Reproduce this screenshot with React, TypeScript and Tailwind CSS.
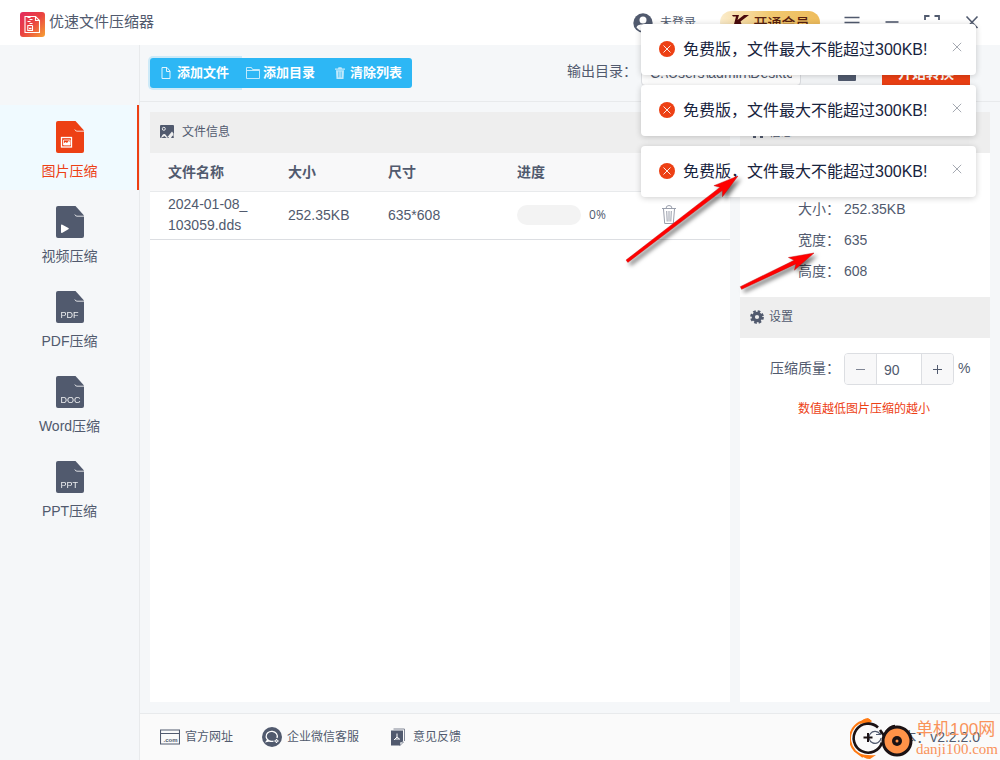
import { useState } from 'react';
import type { ReactNode } from 'react';

interface NavItem {
    label: string;
    badge: ReactNode;
}

interface FileItem {
    name: string;
    size: string;
    width: number;
    height: number;
    progress: number;
}

const BadgeText = ({ text }: { text: string }) => (
    <text x="4.5" y="27" fontSize="9" fill="#fff" opacity="0.9" fontFamily="Liberation Sans, Arial, sans-serif">{text}</text>
);

const navItems: NavItem[] = [
    {
        label: '图片压缩',
        badge: (
            <g>
                <rect x="5.5" y="16.5" width="10" height="9.5" fill="none" stroke="#fff" strokeWidth="1.3" />
                <path d="M7.500 19h6.500v5H7.500z" fill="none" stroke="#fff" strokeWidth=".8" />
                <path d="M7.500 24v-1.500l2-1.500 1.500 1 1.500-2 1.500 1v3z" fill="#fff" />
            </g>
        ),
    },
    { label: '视频压缩', badge: <path d="M5 19.500q0-1.500 1.400-.800l6 3.400q1 .600 0 1.200l-6 3.400q-1.400.700-1.400-.800z" fill="#fff" /> },
    { label: 'PDF压缩', badge: <BadgeText text="PDF" /> },
    { label: 'Word压缩', badge: <BadgeText text="DOC" /> },
    { label: 'PPT压缩', badge: <BadgeText text="PPT" /> },
];

const files: FileItem[] = [
    { name: '2024-01-08_103059.dds', size: '252.35KB', width: 635, height: 608, progress: 0 },
];

const FileIcon = ({ children }: { children: ReactNode }) => (
    <svg width="28" height="32" viewBox="0 0 28 32">
        <path d="M2 0h17.500l8.500 9.500V30a2 2 0 0 1-2 2H2a2 2 0 0 1-2-2V2a2 2 0 0 1 2-2z" fill="currentColor" />
        <path d="M18.800 8.500q.700 1.700 2.200 1.700h7" fill="none" stroke="#fff" strokeWidth="1" opacity="0.8" />
        {children}
    </svg>
);

const Logo = () => (
    <svg width="25" height="25" viewBox="0 0 25 25">
        <defs>
            <linearGradient id="logo" x1="0" y1="0" x2="1" y2="1">
                <stop offset="0" stopColor="#e3295f" />
                <stop offset="0.5" stopColor="#ea4440" />
                <stop offset="1" stopColor="#f7a234" />
            </linearGradient>
        </defs>
        <rect width="25" height="25" rx="3" fill="url(#logo)" />
        <path d="M5 4.500h10.500l4 4v12H5z M15.500 4.500v4h4" fill="none" stroke="#fff" strokeWidth="1.100" />
        <path d="M7.500 5.500h3M9.500 7.500h3M7.500 9.500h3M9.500 11.500h3M7.500 13.500h5" stroke="#fff" strokeWidth="1.100" />
        <path d="M7.800 13.500v5h4.700v-5" fill="none" stroke="#fff" strokeWidth="1.100" />
        <path d="M9 16.500h2.500" stroke="#fff" strokeWidth="1.400" />
    </svg>
);

const Header = () => (
    <header className="flex h-[45px] items-center justify-between bg-white px-5">
        <div className="flex items-center gap-1 pt-1">
            <Logo />
            <h1 className="-mt-1 text-[15px]">优速文件压缩器</h1>
        </div>
        <div className="flex items-center">
            <button className="flex items-center gap-[7px] text-xs">
                <svg width="20" height="20" viewBox="0 0 20 20">
                    <circle cx="10" cy="10" r="9.700" fill="currentColor" />
                    <circle cx="10" cy="7" r="3.500" fill="#fff" />
                    <path d="M3.500 14.500c1-3 3.500-3 6.500-3s5.500 0 6.500 3c-2 2.500-4 3.500-6.500 3.500s-4.500-1-6.500-3.500z" fill="#fff" />
                </svg>
                未登录
            </button>
            <button className="ml-6 flex h-[23px] w-[100px] items-center justify-center gap-1 rounded-full bg-gradient-to-r from-[#fbeccb] via-[#f1c86f] to-[#eebc5c] text-sm font-medium text-[#57200f]">
                <svg width="19" height="15" viewBox="0 0 19 15">
                    <path d="M1 0h7L6.500 5 13 0h5l-8.500 6.500L13 15H9L6.500 9 5 15H1.500L5 1.500H2z" fill="#4a0a0c" />
                </svg>
                开通会员
            </button>
            <button className="ml-6" aria-label="菜单">
                <svg width="16" height="16" viewBox="0 0 16 16" fill="none" stroke="currentColor" strokeWidth="1.600">
                    <path d="M.5 2.500h15M.5 7.500h15M.5 12.500h15" />
                </svg>
            </button>
            <button className="ml-6" aria-label="最小化">
                <svg width="16" height="16" viewBox="0 0 16 16" fill="none" stroke="currentColor" strokeWidth="1.600">
                    <path d="M1.500 7h13" />
                </svg>
            </button>
            <button className="ml-6" aria-label="最大化">
                <svg width="16" height="16" viewBox="0 0 16 16" fill="none" stroke="currentColor" strokeWidth="1.800">
                    <path d="M1 5V1h4.500M10.500 1H15v4M15 11v4h-4.500M5.500 15H1v-4" />
                </svg>
            </button>
            <button className="ml-6" aria-label="关闭">
                <svg width="16" height="16" viewBox="0 0 16 16" fill="none" stroke="currentColor" strokeWidth="1.600">
                    <path d="M2.500 1.500l11 11.500M13.500 1.500L2.500 13" />
                </svg>
            </button>
        </div>
    </header>
);

const Sidebar = ({ active, onSelect }: { active: number; onSelect: (i: number) => void }) => (
    <nav className="flex w-[140px] shrink-0 flex-col border-r border-[#e8eaec] pt-[60px]">
        {navItems.map((item, i) => (
            <button
                key={item.label}
                onClick={() => onSelect(i)}
                className={`flex h-[85px] flex-col items-center gap-2 pt-4 text-sm ${i === active ? 'bg-[#f0faff] text-[#ed4014] shadow-[inset_-2px_0_0_#ed4014]' : ''}`}
            >
                <FileIcon>{item.badge}</FileIcon>
                <span>{item.label}</span>
            </button>
        ))}
    </nav>
);

const Toolbar = () => (
    <div className="flex h-[57px] items-center justify-between border-b border-[#e8eaec] pl-[10px] pr-[30px]">
        <div className="flex h-[30px] rounded-[3px] bg-[#2db7f5] text-[13px] font-bold text-white">
            <button className="flex w-[90px] items-center gap-[6px] rounded-l-[3px] pl-[11px] shadow-[0_0_0_2px_rgba(45,183,245,0.2)]">
                <svg width="10" height="12" viewBox="0 0 10 12" fill="none" stroke="#fff" opacity="0.85">
                    <path d="M1 .5h5L9 4v7.500H1z M5.500.5v4H9" />
                </svg>
                添加文件
            </button>
            <button className="relative flex w-[86px] items-center gap-[3px] bg-[#2db7f5] pl-[6px]">
                <svg width="14" height="12" viewBox="0 0 14 12" fill="none" stroke="#fff" opacity="0.7">
                    <path d="M.5.5h5l1 2h7v9H.500z M.500 3.500h13" />
                </svg>
                添加目录
            </button>
            <button className="flex w-[86px] items-center gap-[5px] rounded-r-[3px] pl-[9px]">
                <svg width="10" height="12" viewBox="0 0 10 12" opacity="0.7">
                    <path d="M0 1.500h3L3.500.3h3l.5 1.200h3v1.200H0z" fill="#fff" />
                    <path d="M1 3.200h8L8.500 12h-7z" fill="#fff" />
                    <path d="M3.500 4.500v6M5 4.500v6M6.500 4.500v6" stroke="#2db7f5" strokeWidth=".5" />
                </svg>
                清除列表
            </button>
        </div>
        <div className="flex items-center">
            <label htmlFor="output" className="-mt-1 mr-1 text-sm">输出目录：</label>
            <input
                id="output"
                readOnly
                value="C:\Users\admin\Desktop"
                className="h-[26px] w-40 rounded border border-[#dcdee2] bg-white px-2 text-sm"
            />
            <button className="ml-[37px]" aria-label="打开目录">
                <svg width="18" height="18" viewBox="0 0 18 18" fill="currentColor">
                    <path d="M0 3a2 2 0 0 1 2-2h5l2 3h7a2 2 0 0 1 2 2v10a1 1 0 0 1-1 1H1a1 1 0 0 1-1-1z" />
                </svg>
            </button>
            <button className="ml-[26px] h-[30px] w-[88px] bg-[#ed4014] text-sm font-bold text-white">开始转换</button>
        </div>
    </div>
);

const PanelHeader = ({ icon, title }: { icon: ReactNode; title: string }) => (
    <h2 className="flex h-[41px] items-center bg-[#eee] px-[10px] pb-[2px] text-xs">
        {icon}
        {title}
    </h2>
);

const FilePanel = () => (
    <section className="flex-1 bg-white">
        <PanelHeader
            title="文件信息"
            icon={
                <svg className="mr-2" width="14" height="14" viewBox="0 0 14 14">
                    <rect width="14" height="13" rx="1" fill="currentColor" />
                    <circle cx="3.800" cy="3.800" r="1.500" fill="none" stroke="#eee" />
                    <path d="M1 13q1.500-4.500 3.500-4 1.500.5 2 2l1 1 2-2.500L12 6.500l1.500 2V12l-1-1.500-1.500 2.500H9l-.500-1-2 1-2-2z" fill="#eee" />
                </svg>
            }
        />
        <table className="w-full table-fixed text-left text-sm">
            <colgroup>
                <col className="w-[120px]" />
                <col className="w-[100px]" />
                <col />
                <col className="w-[151px]" />
                <col className="w-20" />
            </colgroup>
            <thead>
                <tr className="h-[38px] border-b border-[#e8eaec] bg-[#f8f8f9]">
                    <th className="px-[18px]">文件名称</th>
                    <th className="pl-[18px]">大小</th>
                    <th className="pl-[18px]">尺寸</th>
                    <th className="pl-[18px]">进度</th>
                    <th />
                </tr>
            </thead>
            <tbody>
                {files.map((file) => (
                    <tr key={file.name} className="h-12 border-b border-[#dcdee2]">
                        <td className="break-all pl-[18px] pr-4 leading-[21px]">{file.name}</td>
                        <td className="pl-[18px]">{file.size}</td>
                        <td className="pl-[18px]">{file.width}*{file.height}</td>
                        <td className="pl-[18px]">
                            <div className="flex items-center gap-2">
                                <div className="h-5 w-16 overflow-hidden rounded-full bg-[#f3f3f3]">
                                    <div className="h-full bg-[#2db7f5]" style={{ width: `${file.progress}%` }} />
                                </div>
                                <span className="font-['Open_Sans',sans-serif] text-xs">{file.progress}%</span>
                            </div>
                        </td>
                        <td className="pb-[2px] pl-3">
                            <button className="block" aria-label="删除">
                                <svg width="14" height="19" viewBox="0 0 14 19" fill="none" stroke="#9a9fac">
                                    <path d="M0 3.500h14M4 3.500q0-3 3-3t3 3M1.500 4l1.200 14.500h8.600L12.500 4M4.700 6l.500 10.500M7 6v10.500M9.300 6l-.500 10.500" />
                                </svg>
                            </button>
                        </td>
                    </tr>
                ))}
            </tbody>
        </table>
    </section>
);

const InfoPanel = ({ file }: { file: FileItem }) => {
    const [quality, setQuality] = useState(90);

    const rows = [
        ['名称', file.name],
        ['大小', file.size],
        ['宽度', file.width],
        ['高度', file.height],
    ];

    return (
        <section className="w-[250px] shrink-0 bg-white">
            <PanelHeader
                title="信息"
                icon={
                    <svg className="ml-[3px] mr-[6px]" width="10" height="14" viewBox="0 0 10 14" fill="currentColor">
                        <path d="M2 1h6v4h2v8H7V9H3v4H0V5h2z" />
                    </svg>
                }
            />
            <dl className="pb-[11px] pt-[9px] text-sm">
                {rows.map(([label, value]) => (
                    <div key={label} className="flex h-[31px] items-center pl-[58px]">
                        <dt className="w-[46px] shrink-0">{label}：</dt>
                        <dd className="max-w-[125px] truncate">{value}</dd>
                    </div>
                ))}
            </dl>
            <PanelHeader
                title="设置"
                icon={
                    <svg className="mr-[5px]" width="14" height="14" viewBox="0 0 14 14" fill="none" stroke="currentColor">
                        <circle cx="7" cy="7" r="3.700" strokeWidth="3.200" />
                        <circle cx="7" cy="7" r="5.700" strokeWidth="2.400" strokeDasharray="2.600 1.877" />
                    </svg>
                }
            />
            <div className="flex items-center pl-[30px] pt-[15px] text-sm">
                <label htmlFor="quality" className="w-[74px] pb-[2px]">压缩质量：</label>
                <div className="flex h-8 overflow-hidden rounded border border-[#dcdee2]">
                    <button className="w-8 border-r border-[#dcdee2] bg-[#f8f8f9]" aria-label="减少" onClick={() => setQuality(Math.max(1, quality - 1))}>
                        <svg className="mx-auto" width="9" height="9" viewBox="0 0 9 9" stroke="#808695"><path d="M0 4.500h9" /></svg>
                    </button>
                    <input
                        id="quality"
                        className="w-11 pl-[7px] pt-[2px]"
                        value={quality}
                        onChange={(e) => setQuality(Number(e.target.value) || 0)}
                    />
                    <button className="w-8 border-l border-[#dcdee2] bg-[#f8f8f9]" aria-label="增加" onClick={() => setQuality(Math.min(100, quality + 1))}>
                        <svg className="mx-auto" width="9" height="9" viewBox="0 0 9 9" stroke="#515a6e"><path d="M0 4.500h9M4.500 0v9" /></svg>
                    </button>
                </div>
                <span className="ml-1 pb-[2px]">%</span>
            </div>
            <p className="mt-4 pl-[58px] text-xs text-[#ed4014]">数值越低图片压缩的越小</p>
        </section>
    );
};

const Footer = () => (
    <footer className="flex h-[47px] items-center justify-between border-t border-[#e8eaec] bg-[#fafafa] px-5 text-xs">
        <div className="flex items-center">
            <a href="#site" className="flex items-center gap-[5px]">
                <svg width="20" height="16" viewBox="0 0 20 16">
                    <path d="M.5 1h19v14H.500zM.500 4.500h19" fill="none" stroke="currentColor" strokeWidth="1.100" />
                    <text x="3.500" y="12.500" fontSize="6" fontWeight="bold" fill="currentColor" fontFamily="Liberation Sans, Arial, sans-serif">.com</text>
                </svg>
                官方网址
            </a>
            <a href="#service" className="ml-[29px] flex items-center gap-[5px]">
                <svg width="20" height="20" viewBox="0 0 20 20" fill="none" stroke="#fff">
                    <circle cx="10" cy="10" r="10" fill="#515a6e" stroke="none" />
                    <path d="M15 11A5.600 5 0 1 0 11.500 14.100M6 12.500l-1.500 2 3-.6" strokeWidth="1.300" />
                    <path d="M14.500 12v4M12.500 14h4" strokeWidth="1.400" strokeDasharray="1.500 1" />
                </svg>
                企业微信客服
            </a>
            <a href="#feedback" className="ml-8 flex items-center gap-[7px]">
                <svg width="15" height="18" viewBox="0 0 15 18">
                    <path d="M2.500 1h11v12" fill="none" stroke="#808695" />
                    <path d="M0 2.500h12V13l-3 4.500H0z" fill="currentColor" />
                    <path d="M9 17.500V14h3.500z" fill="#fafafa" stroke="currentColor" strokeWidth=".6" />
                    <path d="M6 5.500v3.500M6 9l-3 3M6 9l3 2.500M4 11h4" fill="none" stroke="#fff" />
                </svg>
                意见反馈
            </a>
        </div>
        <div className="flex items-center gap-[6px] text-sm">
            <svg width="14" height="14" viewBox="0 0 14 14" fill="none" stroke="currentColor" strokeWidth="1.200">
                <path d="M12 4A6 6 0 1 0 13 8M12.500 0v4.500H8" />
            </svg>
            <span>版本：v2.2.2.0</span>
        </div>
    </footer>
);

const Toast = ({ onClose }: { onClose: () => void }) => (
    <div className="flex h-[51px] w-[335px] items-center rounded bg-white pl-[18px] pr-[14px] text-base text-[#17233d] shadow-[0_1px_6px_rgba(0,0,0,0.2)]" role="alert">
        <svg className="mb-[2px]" width="16" height="16" viewBox="0 0 16 16">
            <circle cx="8" cy="8" r="8" fill="#ed4014" />
            <path d="M4.500 4.500l7 7M11.500 4.500l-7 7" stroke="#fff" strokeWidth=".9" />
        </svg>
        <span className="ml-2 flex-1 whitespace-nowrap">免费版，文件最大不能超过300KB!</span>
        <button className="mb-[6px]" onClick={onClose} aria-label="关闭提示">
            <svg width="10" height="10" viewBox="0 0 10 10" stroke="#a5a9b2"><path d="M.8.8l8.400 8.400M9.200.8L.8 9.200" /></svg>
        </button>
    </div>
);

// tip at (0,0) pointing right, tail drawn to the given length
const Arrow = ({ x, y, angle, length }: { x: number; y: number; angle: number; length: number }) => (
    <g transform={`translate(${x} ${y}) rotate(${angle})`}>
        <path
            d={`M0 0L-25 -7L-21 -2L${-length} -1.500V1.500L-21 2L-25 7z`}
            fill="#ff0000"
            stroke="#c00808"
            strokeWidth=".4"
        />
    </g>
);

const Arrows = () => (
    <svg className="pointer-events-none absolute right-[170px] top-[160px] drop-shadow-[3px_3px_2px_rgba(0,0,0,0.55)]" width="210" height="140" viewBox="620 160 210 140">
        <Arrow x={738} y={176} angle={-37.500} length={140} />
        <Arrow x={814} y={253} angle={-25.600} length={81} />
    </svg>
);

const Watermark = () => (
    <div className="pointer-events-none absolute bottom-0 right-[2px] flex items-center gap-[2px] text-[#f9935a]">
        <svg width="64" height="42" viewBox="0 0 64 42" fill="none">
            <path d="M20 2A19 18.500 0 0 0 5 33L13 39" stroke="#ff7a12" strokeWidth="2" />
            <path d="M9 6Q13 0 18 0l4 3-2 2q-6 0-11 1zM8 35q8 3 18 2l-6 4q-6 0-12-6z" fill="#ff7a12" />
            <path d="M28 9.500a14.500 14.500 0 1 0 4 15M30 12l5 7M45 8q-5 0-9 6" stroke="#1b1214" strokeWidth="2.600" />
            <path d="M18 15v9M13.500 19.500h9" stroke="#1b1214" strokeWidth="2" />
            <circle cx="47" cy="23" r="14" fill="#ff9248" stroke="#1b1214" strokeWidth="3" />
            <circle cx="47" cy="23" r="5" fill="#1b1214" />
            <circle cx="47" cy="23" r="1.500" fill="#ff9248" />
        </svg>
        <div>
            <p className="text-[17px] leading-5">单机100网</p>
            <p className="font-['Liberation_Serif',serif] text-[15px] leading-[18px]">danji100.com</p>
        </div>
    </div>
);

const App = () => {
    const [active, setActive] = useState(0);
    const [toasts, setToasts] = useState([1, 2, 3]);

    return (
        <div className="relative flex min-h-screen flex-col overflow-hidden bg-[#f5f7f9] font-['Liberation_Sans','Noto_Sans_CJK_SC',sans-serif] text-[#515a6e]">
            <Header />
            <div className="flex flex-1">
                <Sidebar active={active} onSelect={setActive} />
                <main className="flex min-w-0 flex-1 flex-col">
                    <Toolbar />
                    <div className="flex flex-1 gap-[10px] px-[10px] pb-[11px] pt-[10px]">
                        <FilePanel />
                        <InfoPanel file={files[0]} />
                    </div>
                    <Footer />
                </main>
            </div>
            <div className="absolute right-6 top-6 flex flex-col gap-[10px]">
                {toasts.map((id) => (
                    <Toast key={id} onClose={() => setToasts(toasts.filter((t) => t !== id))} />
                ))}
            </div>
            <Arrows />
            <Watermark />
        </div>
    );
};

export default App;
